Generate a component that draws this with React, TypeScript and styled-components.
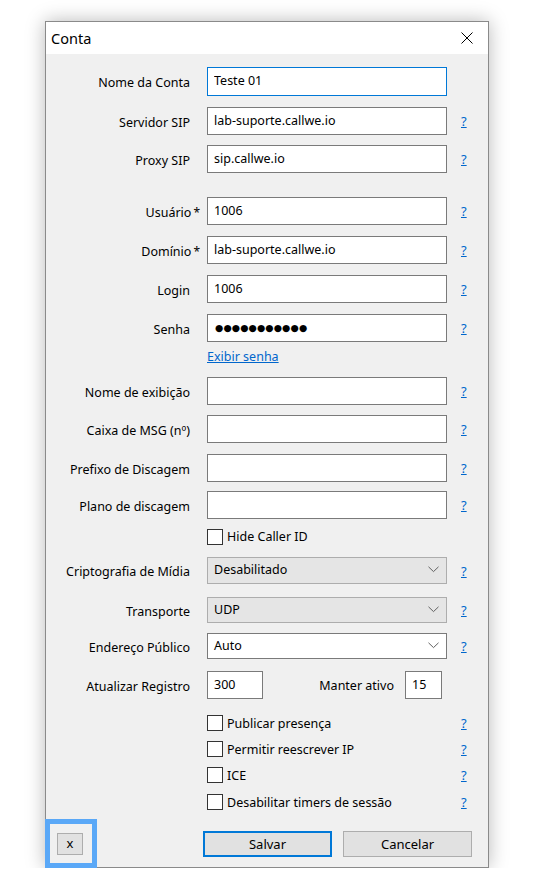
import React from "react";
import styled, { createGlobalStyle } from "styled-components";

const Global = createGlobalStyle`
  html, body { margin: 0; padding: 0; background: #ffffff; }
  body { font-family: "Noto Sans", "Open Sans", sans-serif; font-size: 12.5px; color: #000; }
  * { box-sizing: border-box; }
`;

const Window = styled.div`
  margin: 21px 0 0 45px;
  width: 444px;
  height: 847px;
  display: flex;
  flex-direction: column;
  border: 1px solid #8a8a8a;
  background: #f0f0f0;
  box-shadow: 0 0 18px rgba(0, 0, 0, 0.28);
`;

const TitleBar = styled.div`
  height: 32px;
  flex: none;
  background: #ffffff;
  display: flex;
  align-items: center;
  justify-content: space-between;
  padding: 0 15px 0 5px;
  font-size: 14.5px;
`;

const Body = styled.div`
  flex: 1;
  display: flex;
  flex-direction: column;
  padding-top: 13px;
`;

const Row = styled.div<{ $h: number; $m: number }>`
  display: grid;
  grid-template-columns: 161px 240px 1fr;
  align-items: center;
  height: ${(p) => p.$h}px;
  margin-top: ${(p) => p.$m}px;
`;

const Label = styled.div`
  text-align: right;
  padding: 2px 17px 0 0;
  white-space: nowrap;
`;

const Req = styled.span`
  margin-left: 2px;
  margin-right: -10px;
  font-size: 12px;
`;

const TextBox = styled.input<{ $focus?: boolean }>`
  width: 100%;
  height: 100%;
  margin: 0;
  border: 1px solid ${(p) => (p.$focus ? "#0078d7" : "#7a7a7a")};
  background: #ffffff;
  padding: 0 6px 2px;
  font: inherit;
  color: #000;
  outline: none;
`;

const SmallBox = styled(TextBox)<{ $w: number }>`
  width: ${(p) => p.$w}px;
  flex: none;
`;

const PasswordBox = styled.div`
  height: 100%;
  border: 1px solid #7a7a7a;
  background: #ffffff;
  display: flex;
  align-items: center;
  padding: 0 0 1px 7px;
  font-family: "DejaVu Sans", sans-serif;
  font-size: 9.5px;
  letter-spacing: 0.1px;
`;

const Combo = styled.div<{ $editable?: boolean }>`
  height: 100%;
  display: flex;
  align-items: center;
  justify-content: space-between;
  padding: 0 7px 2px 6px;
  border: 1px solid ${(p) => (p.$editable ? "#7a7a7a" : "#adadad")};
  background: ${(p) => (p.$editable ? "#ffffff" : "#e5e5e5")};
`;

const Help = styled.a`
  padding-left: 14px;
  color: #0066cc;
  text-decoration: underline;
  font-size: 13px;
  cursor: pointer;
`;

const Link = styled.a`
  color: #0066cc;
  text-decoration: underline;
  cursor: pointer;
`;

const Pair = styled.div`
  display: flex;
  align-items: center;
  justify-content: space-between;
  height: 100%;
  padding-right: 5px;
`;

const PairRight = styled.div`
  display: flex;
  align-items: center;
  gap: 11px;
  height: 100%;
`;

const CheckLine = styled.label`
  display: flex;
  align-items: center;
  gap: 4px;
  white-space: nowrap;
`;

const Box = styled.span`
  width: 16px;
  height: 16px;
  flex: none;
  border: 1px solid #333333;
  background: #ffffff;
`;

const Footer = styled.div`
  display: flex;
  align-items: center;
  height: 26px;
  margin-top: 22px;
  padding-left: 11px;
`;

const Button = styled.button<{ $default?: boolean }>`
  width: 129px;
  height: 26px;
  margin: 0;
  padding: 0;
  font: inherit;
  font-size: 13px;
  color: #000;
  background: #e1e1e1;
  border: ${(p) => (p.$default ? "2px solid #0078d7" : "1px solid #adadad")};
`;

const ClearButton = styled.button`
  position: relative;
  width: 26px;
  height: 22px;
  margin: 0 120px 0 0;
  padding: 0 0 2px;
  font: inherit;
  font-size: 13px;
  color: #000;
  background: #e1e1e1;
  border: 1px solid #adadad;

  &::after {
    content: "";
    position: absolute;
    top: -15px;
    left: -13px;
    right: -15px;
    bottom: -14px;
    border: 5px solid #5aa8f7;
    pointer-events: none;
  }
`;

const Gap = styled.div`
  width: 11px;
`;

const Chevron = () => (
  <svg width="11" height="7" viewBox="0 0 11 7">
    <path d="M0.5 0.8 L5.5 5.6 L10.5 0.8" fill="none" stroke="#606060" strokeWidth="1" />
  </svg>
);

const CloseIcon = () => (
  <svg width="12" height="12" viewBox="0 0 12 12">
    <path d="M0.5 0.5 L11.5 11.5 M11.5 0.5 L0.5 11.5" stroke="#000" strokeWidth="1" />
  </svg>
);

type Field = {
  label: string;
  value?: string;
  required?: boolean;
  help?: boolean;
  m: number;
  focus?: boolean;
  h?: number;
};

const topFields: Field[] = [
  { label: "Nome da Conta", value: "Teste 01", m: 0, h: 29, focus: true },
  { label: "Servidor SIP", value: "lab-suporte.callwe.io", m: 11, help: true },
  { label: "Proxy SIP", value: "sip.callwe.io", m: 10, help: true },
  { label: "Usuário", value: "1006", required: true, m: 24, help: true },
  { label: "Domínio", value: "lab-suporte.callwe.io", required: true, m: 11, help: true },
  { label: "Login", value: "1006", m: 11, help: true },
];

const midFields: Field[] = [
  { label: "Nome de exibição", m: 12, help: true },
  { label: "Caixa de MSG (nº)", m: 10, help: true },
  { label: "Prefixo de Discagem", m: 11, help: true },
  { label: "Plano de discagem", m: 9, help: true },
];

const checks = [
  { label: "Publicar presença", m: 15 },
  { label: "Permitir reescrever IP", m: 10 },
  { label: "ICE", m: 10 },
  { label: "Desabilitar timers de sessão", m: 11 },
];

const FieldRow = ({ f }: { f: Field }) => (
  <Row $h={f.h ?? 28} $m={f.m}>
    <Label>
      {f.label}
      {f.required && <Req>*</Req>}
    </Label>
    <TextBox $focus={f.focus} defaultValue={f.value ?? ""} />
    {f.help ? <Help>?</Help> : <span />}
  </Row>
);

export default function App() {
  return (
    <>
      <Global />
      <Window>
        <TitleBar>
          <span>Conta</span>
          <CloseIcon />
        </TitleBar>
        <Body>
          {topFields.map((f) => (
            <FieldRow key={f.label} f={f} />
          ))}
          <Row $h={28} $m={11}>
            <Label>Senha</Label>
            <PasswordBox>●●●●●●●●●●●</PasswordBox>
            <Help>?</Help>
          </Row>
          <Row $h={18} $m={5}>
            <span />
            <div>
              <Link>Exibir senha</Link>
            </div>
          </Row>
          {midFields.map((f) => (
            <FieldRow key={f.label} f={f} />
          ))}
          <Row $h={16} $m={9}>
            <span />
            <CheckLine>
              <Box />
              Hide Caller ID
            </CheckLine>
          </Row>
          <Row $h={27} $m={13}>
            <Label>Criptografia de Mídia</Label>
            <Combo>
              Desabilitado
              <Chevron />
            </Combo>
            <Help>?</Help>
          </Row>
          <Row $h={26} $m={13}>
            <Label>Transporte</Label>
            <Combo>
              UDP
              <Chevron />
            </Combo>
            <Help>?</Help>
          </Row>
          <Row $h={26} $m={10}>
            <Label>Endereço Público</Label>
            <Combo $editable>
              Auto
              <Chevron />
            </Combo>
            <Help>?</Help>
          </Row>
          <Row $h={28} $m={12}>
            <Label>Atualizar Registro</Label>
            <Pair>
              <SmallBox $w={56} defaultValue="300" />
              <PairRight>
                <span>Manter ativo</span>
                <SmallBox $w={37} defaultValue="15" />
              </PairRight>
            </Pair>
          </Row>
          {checks.map((c) => (
            <Row key={c.label} $h={16} $m={c.m}>
              <span />
              <CheckLine>
                <Box />
                {c.label}
              </CheckLine>
              <Help>?</Help>
            </Row>
          ))}
          <Footer>
            <ClearButton>x</ClearButton>
            <Button $default>Salvar</Button>
            <Gap />
            <Button>Cancelar</Button>
          </Footer>
        </Body>
      </Window>
    </>
  );
}
